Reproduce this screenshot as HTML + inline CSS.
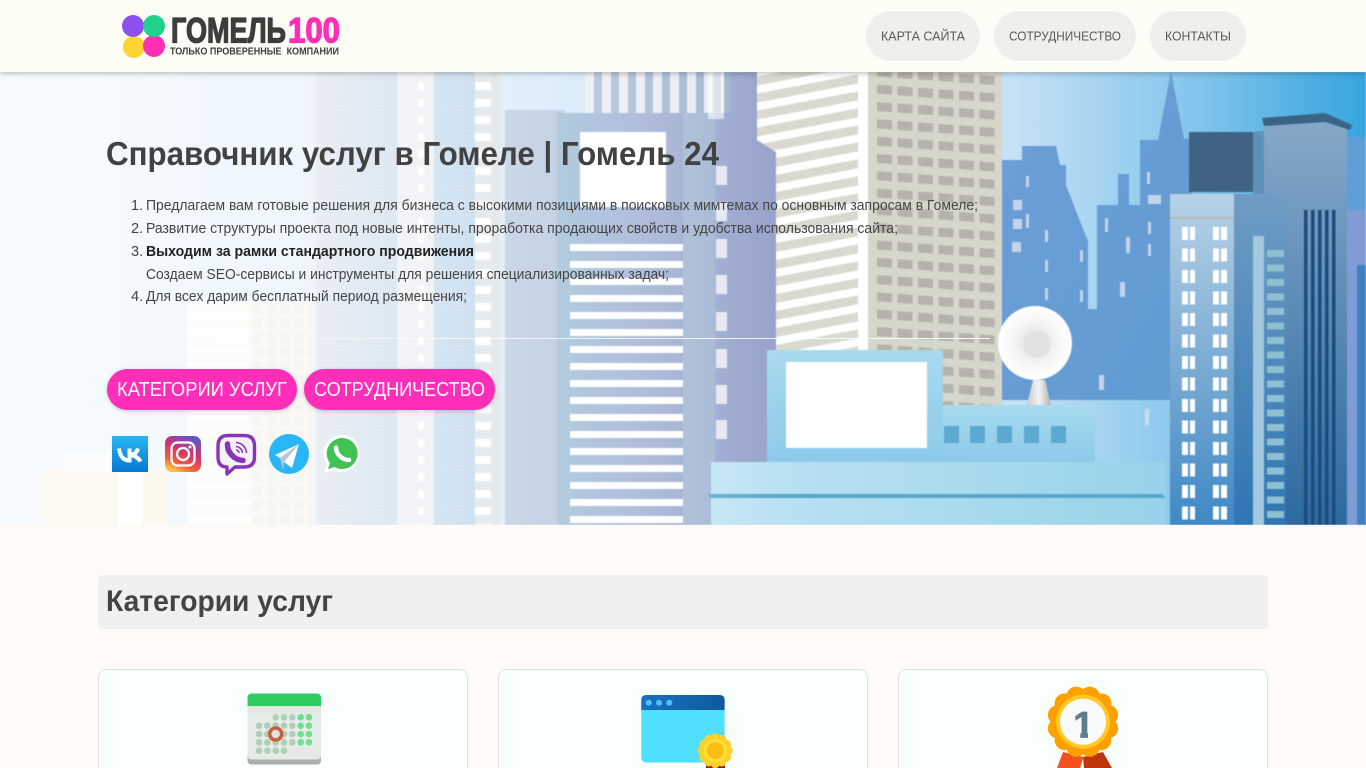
<!DOCTYPE html>
<html lang="ru">
<head>
<meta charset="utf-8">
<title>Справочник услуг в Гомеле | Гомель 24</title>
<style>
html,body{margin:0;padding:0;background:#fefaf5;overflow:hidden}
svg{display:block;font-family:"Liberation Sans","DejaVu Sans",sans-serif}
.d circle{r:3.3px}
</style>
</head>
<body>
<svg width="1366" height="768" viewBox="0 0 1366 768" xmlns="http://www.w3.org/2000/svg">
<defs>
<clipPath id="heroclip"><rect y="72" width="1366" height="453"/></clipPath>
<linearGradient id="sky" x1="0" x2="1" y1="0" y2="0"><stop offset="0" stop-color="#c8e4f8"/><stop offset=".74" stop-color="#c6e2f6"/><stop offset=".87" stop-color="#86c6ec"/><stop offset="1" stop-color="#35a5de"/></linearGradient>
<linearGradient id="fade" gradientUnits="userSpaceOnUse" x1="0" x2="780" y1="0" y2="0"><stop offset="0" stop-color="#fff" stop-opacity=".88"/><stop offset=".4" stop-color="#fff" stop-opacity=".7"/><stop offset=".72" stop-color="#fff" stop-opacity=".4"/><stop offset="1" stop-color="#fff" stop-opacity="0"/></linearGradient>
<linearGradient id="tower" x1="0" x2="1" y1="0" y2="0"><stop offset="0" stop-color="#b4c8dc"/><stop offset=".5" stop-color="#a8c6e0"/><stop offset="1" stop-color="#9cc2e0"/></linearGradient>
<linearGradient id="peri" x1="0" x2="1" y1="0" y2="0"><stop offset="0" stop-color="#7ea8c8"/><stop offset=".35" stop-color="#95a7cf"/><stop offset="1" stop-color="#97a2cb"/></linearGradient>
<linearGradient id="back" x1="0" x2="1" y1="0" y2="1"><stop offset="0" stop-color="#6f9ed6"/><stop offset="1" stop-color="#5f9bd2"/></linearGradient>
<linearGradient id="front" x1="0" x2="0" y1="0" y2="1"><stop offset="0" stop-color="#b7d2e6"/><stop offset=".55" stop-color="#77a9d2"/><stop offset="1" stop-color="#3f88c6"/></linearGradient>
<linearGradient id="side" x1="0" x2="0" y1="0" y2="1"><stop offset="0" stop-color="#6f9cc4"/><stop offset="1" stop-color="#2f76b4"/></linearGradient>
<linearGradient id="right" x1="0" x2="0" y1="0" y2="1"><stop offset="0" stop-color="#86a8c8"/><stop offset="1" stop-color="#2c6aa0"/></linearGradient>
<linearGradient id="low" x1="0" x2="1" y1="0" y2="0"><stop offset="0" stop-color="#bfe4f4"/><stop offset="1" stop-color="#98d2ea"/></linearGradient>
<linearGradient id="mid" x1="0" x2="0" y1="0" y2="1"><stop offset="0" stop-color="#a8daf0"/><stop offset="1" stop-color="#8ccae8"/></linearGradient>
<linearGradient id="stand" x1="0" x2="1" y1="0" y2="0"><stop offset="0" stop-color="#c9c9c9"/><stop offset=".5" stop-color="#f4f4f4"/><stop offset="1" stop-color="#b0b0b0"/></linearGradient>
<radialGradient id="dish"><stop offset="0" stop-color="#dcdcdc"/><stop offset=".6" stop-color="#f6f6f6"/><stop offset="1" stop-color="#ffffff"/></radialGradient>
<linearGradient id="hr" x1="0" x2="1" y1="0" y2="0"><stop offset="0" stop-color="#fff" stop-opacity="0"/><stop offset=".4" stop-color="#fff" stop-opacity=".75"/><stop offset="1" stop-color="#fff" stop-opacity=".9"/></linearGradient>
<linearGradient id="vk" x1="0" x2="0" y1="0" y2="1"><stop offset="0" stop-color="#2bb5f2"/><stop offset="1" stop-color="#0878d4"/></linearGradient>
<linearGradient id="ig" x1=".8" x2=".35" y1="0" y2="1"><stop offset="0" stop-color="#4f5bd5"/><stop offset=".45" stop-color="#d6336c"/><stop offset=".8" stop-color="#f4603c"/><stop offset="1" stop-color="#fdc14a"/></linearGradient>
<linearGradient id="cal" x1="0" x2="0" y1="0" y2="1"><stop offset="0" stop-color="#d6e4da"/><stop offset=".3" stop-color="#e8ece8"/><stop offset="1" stop-color="#e6eae6"/></linearGradient>
<linearGradient id="winbar" x1="0" x2="1" y1="0" y2="0"><stop offset="0" stop-color="#1a70c0"/><stop offset="1" stop-color="#0f5a9e"/></linearGradient>
<pattern id="diag" patternUnits="userSpaceOnUse" width="120" height="17" patternTransform="skewY(-10.8)"><rect width="120" height="9" fill="#d9d9d0"/></pattern>
<pattern id="wins" patternUnits="userSpaceOnUse" x="877" y="3" width="20.5" height="17.3" patternTransform="skewY(4.2)"><rect width="15" height="9" fill="#b6b2aa"/></pattern>
<pattern id="stripes" patternUnits="userSpaceOnUse" x="0" y="244" width="20" height="17"><rect width="20" height="7" fill="#fff"/></pattern>
<pattern id="dashes" patternUnits="userSpaceOnUse" x="0" y="82" width="20" height="17"><rect width="20" height="8" fill="#fff"/></pattern>
<pattern id="hlines" patternUnits="userSpaceOnUse" width="20" height="5"><rect width="20" height="1" fill="#fff" opacity=".14"/></pattern>
<pattern id="pairs" patternUnits="userSpaceOnUse" x="1182" y="227" width="60" height="21.5"><rect width="6" height="13" fill="#fff"/><rect x="8" width="5" height="13" fill="#fff"/><rect x="31" width="6" height="13" fill="#fff"/><rect x="39" width="6" height="13" fill="#fff"/></pattern>
<pattern id="teal" patternUnits="userSpaceOnUse" x="1267" y="250" width="20" height="14.5"><rect width="17" height="7" fill="#8fc0d2"/></pattern>
<pattern id="tall" patternUnits="userSpaceOnUse" x="1304" y="210" width="7" height="20"><rect width="3.500" height="20" fill="#1c4c7c"/></pattern>
<pattern id="topv" patternUnits="userSpaceOnUse" x="585" y="72" width="17" height="20"><rect width="9" height="20" fill="#fff" opacity=".75"/></pattern>
<pattern id="faintw" patternUnits="userSpaceOnUse" x="252" y="305" width="14" height="14"><rect width="10" height="9" fill="#d8d4c2"/></pattern>
</defs>

<rect width="1366" height="768" fill="#fefaf5"/>

<g clip-path="url(#heroclip)">
<g style="filter:blur(.5px)">
<!-- hero art -->
<rect y="72" width="1366" height="453" fill="url(#sky)"/>
<rect x="505" y="110" width="60" height="415" fill="#9db4d2"/>
<path d="M1001 255V160H1022V146H1056L1060 165H1066V185L1087 239H1088V309H1097V205H1118V174H1129V205H1140V140H1158L1171 72L1184 139H1192V400H1001Z" fill="url(#back)"/>
<g fill="#d4dff0" opacity=".85"><rect x="1013" y="200" width="9" height="10"/><rect x="1013" y="219" width="9" height="10"/><rect x="1012" y="242" width="9" height="10"/><rect x="1026" y="176" width="3" height="11"/><rect x="1026" y="214" width="3" height="14"/><rect x="1045" y="230" width="3" height="12"/><rect x="1045" y="260" width="3" height="12"/><rect x="1045" y="288" width="3" height="12"/><rect x="1080" y="250" width="3" height="12"/><rect x="1080" y="290" width="3" height="12"/><rect x="1105" y="218" width="3" height="14"/><rect x="1126" y="237" width="4" height="16"/><rect x="1148" y="222" width="3" height="12"/><rect x="1148" y="244" width="3" height="12"/><rect x="1120" y="282" width="5" height="15"/><rect x="1147" y="172" width="3" height="12"/><rect x="1148" y="195" width="13" height="9"/><rect x="1099" y="375" width="5" height="15"/><rect x="1145" y="409" width="4" height="16"/></g>

<!-- cylindrical tower -->
<rect x="316" y="72" width="159" height="453" fill="url(#tower)"/>
<rect x="316" y="72" width="81" height="453" fill="url(#hlines)"/>
<rect x="434" y="72" width="41" height="453" fill="url(#hlines)"/>
<rect x="397" y="72" width="37" height="453" fill="#dfe4ea"/>
<rect x="418" y="72" width="6" height="453" fill="url(#dashes)"/>
<rect x="475" y="72" width="25" height="453" fill="#d0d6dc"/>
<rect x="475" y="72" width="16" height="453" fill="url(#dashes)"/>

<!-- white tower left -->
<rect x="187" y="302" width="62" height="223" fill="#f4f4f2"/>
<rect x="249" y="302" width="65" height="223" fill="#eeece2"/>
<rect x="249" y="302" width="65" height="223" fill="url(#faintw)" opacity=".6"/>
<rect x="187" y="302" width="62" height="223" fill="url(#stripes)"/>
<path d="M43 469H167V525H43Z" fill="#f0dfae"/>
<rect x="118" y="469" width="24" height="56" fill="#fff"/>
<rect x="65" y="452" width="60" height="20" fill="#e8eef0"/>

<!-- blue-grey block -->
<rect x="585" y="72" width="172" height="47" fill="#9ab0cc"/>
<rect x="585" y="72" width="139" height="47" fill="url(#topv)"/>
<path d="M557 113H731V72H757V140L777 152V525H557Z" fill="url(#peri)"/>
<path d="M683 113H715L715 150V525H683Z" fill="#a8c0d6" opacity=".55"/>
<rect x="580" y="132" width="86" height="75" fill="#fff"/>
<rect x="570" y="244" width="113" height="281" fill="url(#stripes)"/>
<g fill="#e6e8f2"><rect x="716" y="166" width="11" height="19"/><rect x="716" y="202" width="11" height="19"/><rect x="716" y="239" width="11" height="19"/><rect x="716" y="275" width="11" height="19"/><rect x="716" y="312" width="11" height="19"/><rect x="716" y="349" width="11" height="19"/><rect x="716" y="385" width="11" height="19"/><rect x="716" y="420" width="11" height="19"/></g>
<rect x="708" y="72" width="16" height="47" fill="#fff" opacity=".6"/>

<!-- striped beige building -->
<path d="M757 72H1002V405H776V152L757 140Z" fill="#fff"/>
<path d="M757 72H858V405H776V152L757 140Z" fill="url(#diag)"/>
<rect x="868" y="72" width="134" height="333" fill="#d6d7cb"/>
<rect x="877" y="72" width="121" height="333" fill="url(#wins)"/>

<!-- dark block + front buildings -->
<rect x="1189" y="132" width="64" height="60" fill="#3f6285"/>
<path d="M1253 132L1275 130V200H1253Z" fill="#5f90b8"/>
<rect x="1345" y="137" width="21" height="388" fill="#5f9fd8"/>
<rect x="1347" y="210" width="19" height="315" fill="#7f9dd4"/>
<rect x="1357" y="265" width="9" height="260" fill="#3f80c2"/>
<path d="M1264 122H1347V525H1264Z" fill="url(#right)"/>
<path d="M1262 118L1325 113L1352 125L1350 130L1325 122L1264 126Z" fill="#3a6485"/>
<rect x="1304" y="210" width="35" height="315" fill="url(#tall)"/>
<rect x="1234" y="194" width="52" height="331" fill="url(#side)"/>
<rect x="1253" y="236" width="11" height="289" fill="#a4c8e0"/>
<rect x="1267" y="250" width="17" height="275" fill="url(#teal)"/>
<rect x="1170" y="194" width="64" height="331" fill="url(#front)"/>
<rect x="1170" y="217" width="64" height="1.500" fill="#c4a898" opacity=".7"/>
<rect x="1182" y="227" width="45" height="298" fill="url(#pairs)"/>

<!-- low building -->
<rect x="943" y="405" width="152" height="57" fill="url(#mid)"/>
<rect x="767" y="350" width="176" height="112" fill="url(#mid)"/>
<rect x="786" y="362" width="141" height="86" fill="#fff"/>
<g fill="#5ba9d0"><rect x="944" y="426" width="15" height="17"/><rect x="970" y="426" width="15" height="17"/><rect x="997" y="426" width="15" height="17"/><rect x="1024" y="426" width="15" height="17"/><rect x="1051" y="426" width="15" height="17"/></g>
<path d="M1027 405L1033 380H1045L1051 405Z" fill="url(#stand)"/>
<ellipse cx="1035" cy="343" rx="37" ry="37" fill="url(#dish)"/>
<circle cx="1037" cy="344" r="14" fill="#e2e2e2"/>
<rect x="711" y="462" width="455" height="63" fill="url(#low)"/>
<path d="M707 494H1162L1166 498H711Z" fill="#58a7cb"/>

<!-- left fade -->
<rect y="72" width="780" height="453" fill="url(#fade)"/>
<rect x="580" y="132" width="86" height="75" fill="#fff"/>
<rect x="570" y="244" width="113" height="281" fill="url(#stripes)"/>
</g>
</g>

<!-- header -->
<rect width="1366" height="72" fill="#fdfdf6" style="filter:drop-shadow(0 1px 3px rgba(0,0,0,.3))"/>
<circle cx="134" cy="47" r="11" fill="#ffd433"/>
<circle cx="154" cy="46" r="11" fill="#ff2fb5"/>
<circle cx="133" cy="26" r="11" fill="#8b50f0"/>
<circle cx="154" cy="26" r="11" fill="#1fd18a"/>
<text x="171" y="42.500" font-size="35" font-weight="700" fill="#3d3d3d" stroke="#3d3d3d" stroke-width="1.300" stroke-linejoin="round" textLength="115" lengthAdjust="spacingAndGlyphs">ГОМЕЛЬ</text>
<text x="288" y="42.500" font-size="35" font-weight="700" fill="#ff2fb5" stroke="#ff2fb5" stroke-width="1.300" stroke-linejoin="round" textLength="52" lengthAdjust="spacingAndGlyphs">100</text>
<text x="170" y="54.500" font-size="10.500" font-weight="700" fill="#3d3d3d" textLength="169" lengthAdjust="spacingAndGlyphs">ТОЛЬКО ПРОВЕРЕННЫЕ&#160;&#160;КОМПАНИИ</text>

<rect x="866" y="11" width="114" height="50" rx="25" fill="#f0f0ea"/>
<rect x="994" y="11" width="142" height="50" rx="25" fill="#f0f0ea"/>
<rect x="1150" y="11" width="96" height="50" rx="25" fill="#f0f0ea"/>
<text x="881" y="40.500" font-size="13" fill="#5a5a5a" textLength="84" lengthAdjust="spacingAndGlyphs">КАРТА САЙТА</text>
<text x="1009" y="40.500" font-size="13" fill="#5a5a5a" textLength="112" lengthAdjust="spacingAndGlyphs">СОТРУДНИЧЕСТВО</text>
<text x="1165" y="40.500" font-size="13" fill="#5a5a5a" textLength="66" lengthAdjust="spacingAndGlyphs">КОНТАКТЫ</text>

<!-- hero text -->
<text x="106" y="165" font-size="33" font-weight="700" fill="#424242" textLength="613" lengthAdjust="spacingAndGlyphs">Справочник услуг в Гомеле | Гомель 24</text>
<g font-size="14.500" fill="#454545">
<text x="131" y="210">1.</text>
<text x="146" y="210" textLength="832" lengthAdjust="spacingAndGlyphs">Предлагаем вам готовые решения для бизнеса с высокими позициями в поисковых мимтемах по основным запросам в Гомеле;</text>
<text x="131" y="233">2.</text>
<text x="146" y="233" textLength="752" lengthAdjust="spacingAndGlyphs">Развитие структуры проекта под новые интенты, проработка продающих свойств и удобства использования сайта;</text>
<text x="131" y="256">3.</text>
<text x="146" y="256" font-weight="700" fill="#222" textLength="328" lengthAdjust="spacingAndGlyphs">Выходим за рамки стандартного продвижения</text>
<text x="146" y="279" textLength="523" lengthAdjust="spacingAndGlyphs">Создаем SEO-сервисы и инструменты для решения специализированных задач;</text>
<text x="131" y="301">4.</text>
<text x="146" y="301" textLength="321" lengthAdjust="spacingAndGlyphs">Для всех дарим бесплатный период размещения;</text>
</g>
<rect x="106" y="338" width="884" height="1" fill="url(#hr)"/>

<!-- buttons -->
<rect x="107" y="369" width="190" height="41" rx="20.500" fill="#ff2eb8" style="filter:drop-shadow(0 1px 2px rgba(0,0,0,.2))"/>
<rect x="304" y="369" width="191" height="41" rx="20.500" fill="#ff2eb8" style="filter:drop-shadow(0 1px 2px rgba(0,0,0,.2))"/>
<text x="117" y="396" font-size="20" fill="#fff" textLength="170" lengthAdjust="spacingAndGlyphs">КАТЕГОРИИ УСЛУГ</text>
<text x="314" y="396" font-size="20" fill="#fff" textLength="171" lengthAdjust="spacingAndGlyphs">СОТРУДНИЧЕСТВО</text>

<!-- social icons -->
<rect x="112" y="436" width="36" height="36" fill="url(#vk)"/>
<path d="M119 448.500Q120.500 460.500 129.500 460.500V448.500M129.500 455Q136 455 138 448.500M129.500 455Q137 455.500 140.500 461.500" fill="none" stroke="#fff" stroke-width="4"/>

<rect x="165" y="436" width="36" height="36" rx="7" fill="url(#ig)"/>
<rect x="171.500" y="442.500" width="23" height="23" rx="6" fill="none" stroke="#fff" stroke-width="2.300"/>
<circle cx="183" cy="454" r="6" fill="none" stroke="#fff" stroke-width="2.300"/>
<circle cx="190" cy="447" r="1.500" fill="#fff"/>

<path d="M228 435.500H244Q254.500 435.500 254.500 446V457Q254.500 467 244 467H235L227 474V467Q218 467 218 457V446Q218 435.500 228 435.500Z" fill="#f5f1f8" stroke="#8a35b8" stroke-width="3.400" stroke-linejoin="round"/>
<path d="M227.500 444C227 452 234 460 243 460.500" fill="none" stroke="#8a35b8" stroke-width="5.500" stroke-linecap="round"/>
<path d="M236 442.500A11 11 0 0 1 246.500 453M236 446.500A7 7 0 0 1 242.500 453M236 450A3 3 0 0 1 239 453" fill="none" stroke="#8a35b8" stroke-width="1.500"/>

<circle cx="289" cy="454" r="20" fill="#29b6f6"/>
<path d="M280 458L299 444L284 462L283 470Z" fill="#b8c8d2"/>
<path d="M275 455L299 444L292 468L284 462L299 444L280 458Z" fill="#fff"/>

<path d="M342 434.500A19 19 0 1 1 333 470.500L323 474L326.500 464.500A19 19 0 0 1 342 434.500Z" fill="#fff" stroke="#e6e6e6" stroke-width=".6"/>
<path d="M342 438A15.500 15.500 0 1 1 334.500 467L328 469L330 463A15.500 15.500 0 0 1 342 438Z" fill="#40c351"/>
<path d="M336 447.500C336 454 342 460 349 460" fill="none" stroke="#fff" stroke-width="4.500" stroke-linecap="round"/>

<!-- section heading -->
<rect x="98" y="575" width="1170" height="54" rx="5" fill="#f0f0f0"/>
<text x="106" y="611" font-size="30" font-weight="700" fill="#444" textLength="227" lengthAdjust="spacingAndGlyphs">Категории услуг</text>

<!-- cards -->
<rect x="98.500" y="669.500" width="369" height="120" rx="8" fill="#f8fffc" stroke="#e0e0e0"/>
<rect x="498.500" y="669.500" width="369" height="120" rx="8" fill="#f8fffc" stroke="#e0e0e0"/>
<rect x="898.500" y="669.500" width="369" height="120" rx="8" fill="#f8fffc" stroke="#e0e0e0"/>

<!-- calendar icon -->
<rect x="247.500" y="700" width="73.500" height="64.500" rx="4" fill="#a9b0aa"/>
<rect x="247.500" y="700" width="73.500" height="59.500" rx="4" fill="url(#cal)"/>
<path d="M247.500 706V698Q247.500 693.500 252 693.500H316.500Q321 693.500 321 698V706Z" fill="#2ecc60"/>
<g class="d" fill="#afceb9">
<circle cx="275.700" cy="717.300" r="3"/><circle cx="284" cy="717.300" r="3"/><circle cx="292.300" cy="717.300" r="3"/>
<circle cx="259" cy="725.700" r="3"/><circle cx="267.300" cy="725.700" r="3"/><circle cx="275.700" cy="725.700" r="3"/><circle cx="284" cy="725.700" r="3"/><circle cx="292.300" cy="725.700" r="3"/>
<circle cx="259" cy="734" r="3"/><circle cx="267.300" cy="734" r="3"/><circle cx="284" cy="734" r="3"/><circle cx="292.300" cy="734" r="3"/>
<circle cx="259" cy="742.300" r="3"/><circle cx="267.300" cy="742.300" r="3"/><circle cx="275.700" cy="742.300" r="3"/><circle cx="284" cy="742.300" r="3"/><circle cx="292.300" cy="742.300" r="3"/>
<circle cx="259" cy="750.700" r="3"/><circle cx="267.300" cy="750.700" r="3"/><circle cx="275.700" cy="750.700" r="3"/><circle cx="284" cy="750.700" r="3"/>
</g>
<g class="d" fill="#6fe08f">
<circle cx="300.700" cy="717.300" r="3"/><circle cx="309" cy="717.300" r="3"/>
<circle cx="300.700" cy="725.700" r="3"/><circle cx="309" cy="725.700" r="3"/>
<circle cx="300.700" cy="734" r="3"/><circle cx="309" cy="734" r="3"/>
<circle cx="300.700" cy="742.300" r="3"/><circle cx="309" cy="742.300" r="3"/>
</g>
<circle cx="275.700" cy="734" r="6" fill="#dfe6e0" stroke="#c8603a" stroke-width="3.500"/>

<!-- window icon -->
<rect x="641.300" y="695" width="83.300" height="67.500" rx="5" fill="#50e0ff"/>
<path d="M641.300 710V700Q641.300 695 646.300 695H719.600Q724.600 695 724.600 700V710Z" fill="url(#winbar)"/>
<circle cx="648.700" cy="702.700" r="3" fill="#4fc3f7"/><circle cx="659" cy="702.700" r="3" fill="#4fc3f7"/><circle cx="669.300" cy="702.700" r="3" fill="#4fc3f7"/>
<path d="M706 765H713V768H706ZM717 765H725V768H717Z" fill="#8e1a3a"/>
<g fill="#fcd22a">
<circle cx="715.300" cy="750.700" r="14"/>
<circle cx="715.300" cy="737.700" r="4.500"/><circle cx="721.800" cy="739.440" r="4.500"/><circle cx="726.560" cy="744.200" r="4.500"/><circle cx="728.300" cy="750.700" r="4.500"/><circle cx="726.560" cy="757.200" r="4.500"/><circle cx="721.800" cy="761.960" r="4.500"/><circle cx="715.300" cy="763.700" r="4.500"/><circle cx="708.800" cy="761.960" r="4.500"/><circle cx="704.040" cy="757.200" r="4.500"/><circle cx="702.300" cy="750.700" r="4.500"/><circle cx="704.040" cy="744.200" r="4.500"/><circle cx="708.800" cy="739.440" r="4.500"/>
</g>
<circle cx="715.300" cy="750.700" r="11.500" fill="#ffe135"/>
<circle cx="715.300" cy="750.700" r="8.500" fill="#fbbc14"/>

<!-- medal icon -->
<path d="M1063 752L1057 768H1080L1083.500 757Z" fill="#f4511e"/>
<path d="M1083 757L1084 768H1112L1103 752Z" fill="#bf360c"/>
<g fill="#ffa000">
<circle cx="1083" cy="721.700" r="31"/>
<circle cx="1089.730" cy="696.590" r="10"/><circle cx="1076.270" cy="696.590" r="10"/><circle cx="1101.380" cy="703.320" r="10"/><circle cx="1064.620" cy="703.320" r="10"/><circle cx="1108.110" cy="714.970" r="10"/><circle cx="1057.890" cy="714.970" r="10"/><circle cx="1108.110" cy="728.430" r="10"/><circle cx="1057.890" cy="728.430" r="10"/><circle cx="1101.380" cy="740.080" r="10"/><circle cx="1064.620" cy="740.080" r="10"/><circle cx="1089.730" cy="746.810" r="10"/><circle cx="1076.270" cy="746.810" r="10"/>
</g>
<circle cx="1083" cy="721.700" r="27" fill="#ffca28"/>
<circle cx="1083" cy="721.700" r="23" fill="#fafafa"/>
<text x="1083.500" y="737.500" font-size="37" font-weight="700" fill="#607d8b" stroke="#607d8b" stroke-width=".7" text-anchor="middle">1</text>
<rect x="1071" y="733" width="9.300" height="6" fill="#fafafa"/>
<rect x="1088" y="733" width="9" height="6" fill="#fafafa"/>
</svg>
</body>
</html>
